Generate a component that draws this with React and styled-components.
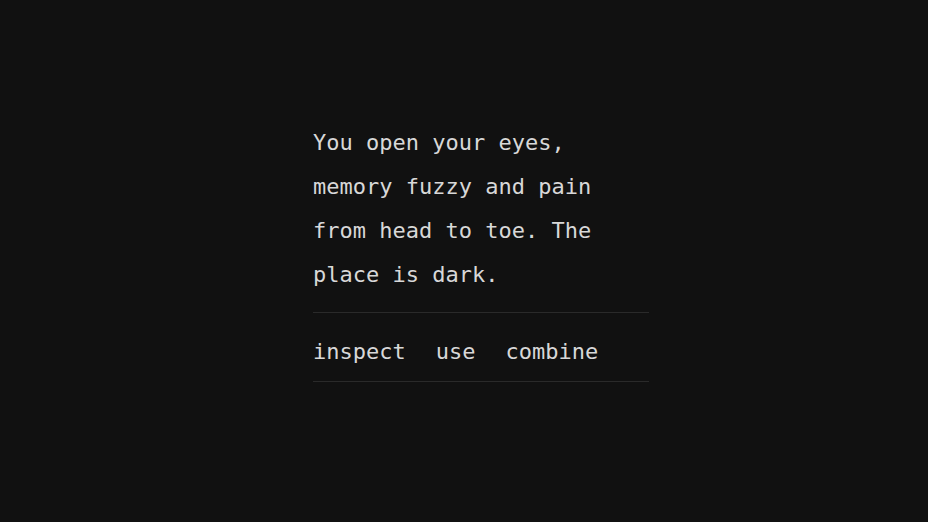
import React from 'react';
import styled, { createGlobalStyle } from 'styled-components';

const GlobalStyle = createGlobalStyle`
  html, body {
    margin: 0;
    background: #111111;
    color: #d8d8d8;
    font-family: "DejaVu Sans Mono", "Liberation Mono", monospace;
  }
`;

const Page = styled.main`
  min-height: 522px;
  display: flex;
  justify-content: center;
  padding: 121px 0 0 34px;
  box-sizing: border-box;
`;

const Story = styled.section`
  width: 336px;
`;

const Text = styled.p`
  margin: 0 0 15px;
  font-size: 22px;
  line-height: 44px;
`;

const Actions = styled.nav`
  display: flex;
  gap: 30px;
  border-top: 1px solid #2a2a2a;
  border-bottom: 1px solid #2a2a2a;
  padding: 17px 0 7px;
`;

const Action = styled.button`
  background: none;
  border: none;
  padding: 0;
  color: inherit;
  font: inherit;
  font-size: 22px;
  line-height: 44px;
  cursor: pointer;
`;

export default function App() {
  const actions = ['inspect', 'use', 'combine'];
  return (
    <>
      <GlobalStyle />
      <Page>
        <Story>
          <Text>
            You open your eyes, memory fuzzy and pain from head to toe. The
            place is dark.
          </Text>
          <Actions>
            {actions.map((a) => (
              <Action key={a}>{a}</Action>
            ))}
          </Actions>
        </Story>
      </Page>
    </>
  );
}
